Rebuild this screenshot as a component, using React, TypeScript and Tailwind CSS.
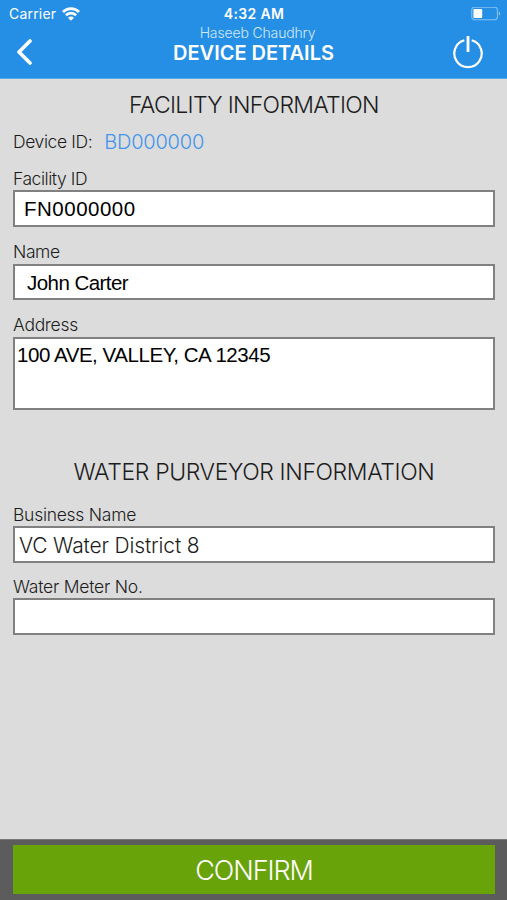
import React from 'react';

const WifiIcon = () => (
  <svg className="w-[18px] h-[14px]" viewBox="0 0 18 14" fill="none" stroke="white" strokeWidth="2.7">
    <path d="M0.9 5C5.4 0.4 12.6 0.4 17.1 5" />
    <path d="M3.9 8.3C6.8 5.4 11.2 5.4 14.1 8.3" />
    <path d="M9 13.8L6 10.8C7.8 9.2 10.2 9.2 12 10.8Z" fill="white" stroke="none" />
  </svg>
);

const BatteryIcon = () => (
  <svg className="w-[30px] h-[14px]" viewBox="0 0 30 14" fill="none">
    <rect x="0.8" y="0.3" width="25.6" height="12.4" rx="2.6" stroke="#84c2f2" strokeWidth="1.1" />
    <rect x="2.4" y="1.9" width="8.8" height="9.2" rx="1" fill="white" />
    <path d="M27.8 4.3C29.8 5.1 29.8 7.9 27.8 8.7Z" fill="#84c2f2" />
  </svg>
);

const BackIcon = () => (
  <svg className="w-4 h-[26px]" viewBox="0 0 16 26" fill="none">
    <path d="M14 2L3 13L14 24" stroke="white" strokeWidth="3.6" strokeLinecap="round" strokeLinejoin="round" />
  </svg>
);

const PowerIcon = () => (
  <svg className="w-8 h-[34px]" viewBox="0 0 32 34" fill="none" stroke="white">
    <path d="M12.3 5.3A13.7 13.7 0 1 0 19.7 5.3" strokeWidth="2.2" />
    <path d="M16 1V17" strokeWidth="2.8" />
  </svg>
);

const Header = () => (
  <header className="relative h-[79px] bg-[#258fe6] text-white border-b border-[#58aaeb]">
    <div className="flex items-center h-[27px] pl-[9px] pr-[6px]">
      <div className="flex flex-1 items-center gap-[6px]">
        <span className="text-[14px] leading-[27px] tracking-[0.2px]">Carrier</span>
        <WifiIcon />
      </div>
      <span className="text-[14px] leading-[27px] font-semibold tracking-[0.35px] mr-[2px]">4:32 AM</span>
      <div className="flex flex-1 justify-end">
        <BatteryIcon />
      </div>
    </div>
    <div className="flex items-start justify-between pl-[16px] pr-[23px]">
      <button className="mt-[12px]" aria-label="Back">
        <BackIcon />
      </button>
      <button className="mt-[8px]" aria-label="Log out">
        <PowerIcon />
      </button>
    </div>
    {/* User and screen title sit over the bar, centered on the screen */}
    <div className="absolute left-0 right-0 top-[24px] flex flex-col items-center pointer-events-none">
      <span className="pl-[8px] text-[14px] leading-[17px] font-light tracking-[-0.15px] text-[#d3e9fb]">Haseeb Chaudhry</span>
      <h1 className="text-[20px] leading-[24px] font-semibold">DEVICE DETAILS</h1>
    </div>
  </header>
);

const labelClass = 'block text-[17.5px] leading-[24px] font-light';
const boxClass = 'w-full bg-white border-2 border-[#808080] whitespace-nowrap';
const valueClass = "font-['Liberation_Sans',sans-serif] text-[20.5px] text-black";

const App = () => {
  return (
    <div className="flex flex-col w-full h-[900px] overflow-hidden bg-[#dcdcdc] text-[#1c1c1c] font-['Inter','Liberation_Sans',sans-serif]">
      <Header />

      <main className="flex-1 pl-[13px] pr-[12px]">
        <h2 className="pt-[10px] text-center text-[23px] leading-[32px] font-light tracking-[-0.7px]">
          FACILITY INFORMATION
        </h2>

        <div className="flex items-center h-[24px] mt-[9px]">
          <span className={`${labelClass} tracking-[-0.4px]`}>Device ID:</span>
          <span className="ml-[12px] text-[20px] leading-[24px] font-light tracking-[-0.2px] text-[#4294ec]">
            BD000000
          </span>
        </div>

        <label className={`${labelClass} mt-[13px] -mb-px tracking-[-0.45px]`}>Facility ID</label>
        <div className={`${boxClass} ${valueClass} h-[37px] pl-[9px] leading-[34px] tracking-[0.5px]`}>
          FN0000000
        </div>

        <label className={`${labelClass} mt-[13px] tracking-[-0.4px]`}>Name</label>
        <div className={`${boxClass} ${valueClass} h-[36px] pl-[12px] leading-[34px] tracking-[-0.55px]`}>
          John Carter
        </div>

        <label className={`${labelClass} mt-[13px] tracking-[-0.3px]`}>Address</label>
        <div className={`${boxClass} ${valueClass} h-[73px] pl-[2px] leading-[32px] tracking-[-0.45px]`}>
          100 AVE, VALLEY, CA 12345
        </div>

        <h2 className="mt-[46px] text-center text-[23px] leading-[32px] font-light tracking-[-0.37px]">
          WATER PURVEYOR INFORMATION
        </h2>

        <label className={`${labelClass} mt-[15px] -mb-px tracking-[-0.27px]`}>Business Name</label>
        <div className={`${boxClass} h-[37px] pl-[4px] text-[21px] leading-[35px] font-light tracking-[-0.17px]`}>
          VC Water District 8
        </div>

        <label className={`${labelClass} mt-[12px] -mb-px tracking-[-0.22px]`}>Water Meter No.</label>
        <div className={`${boxClass} h-[37px]`} />
      </main>

      <footer className="h-[61px] pt-[5px] pl-[13px] pr-[12px] bg-[#5c5c5c] border-t border-[#777]">
        <button className="block w-full h-[49px] bg-[#69a30a] text-white text-[27px] leading-[51px] font-light tracking-[-1.1px]">
          CONFIRM
        </button>
      </footer>
    </div>
  );
};

export default App;
